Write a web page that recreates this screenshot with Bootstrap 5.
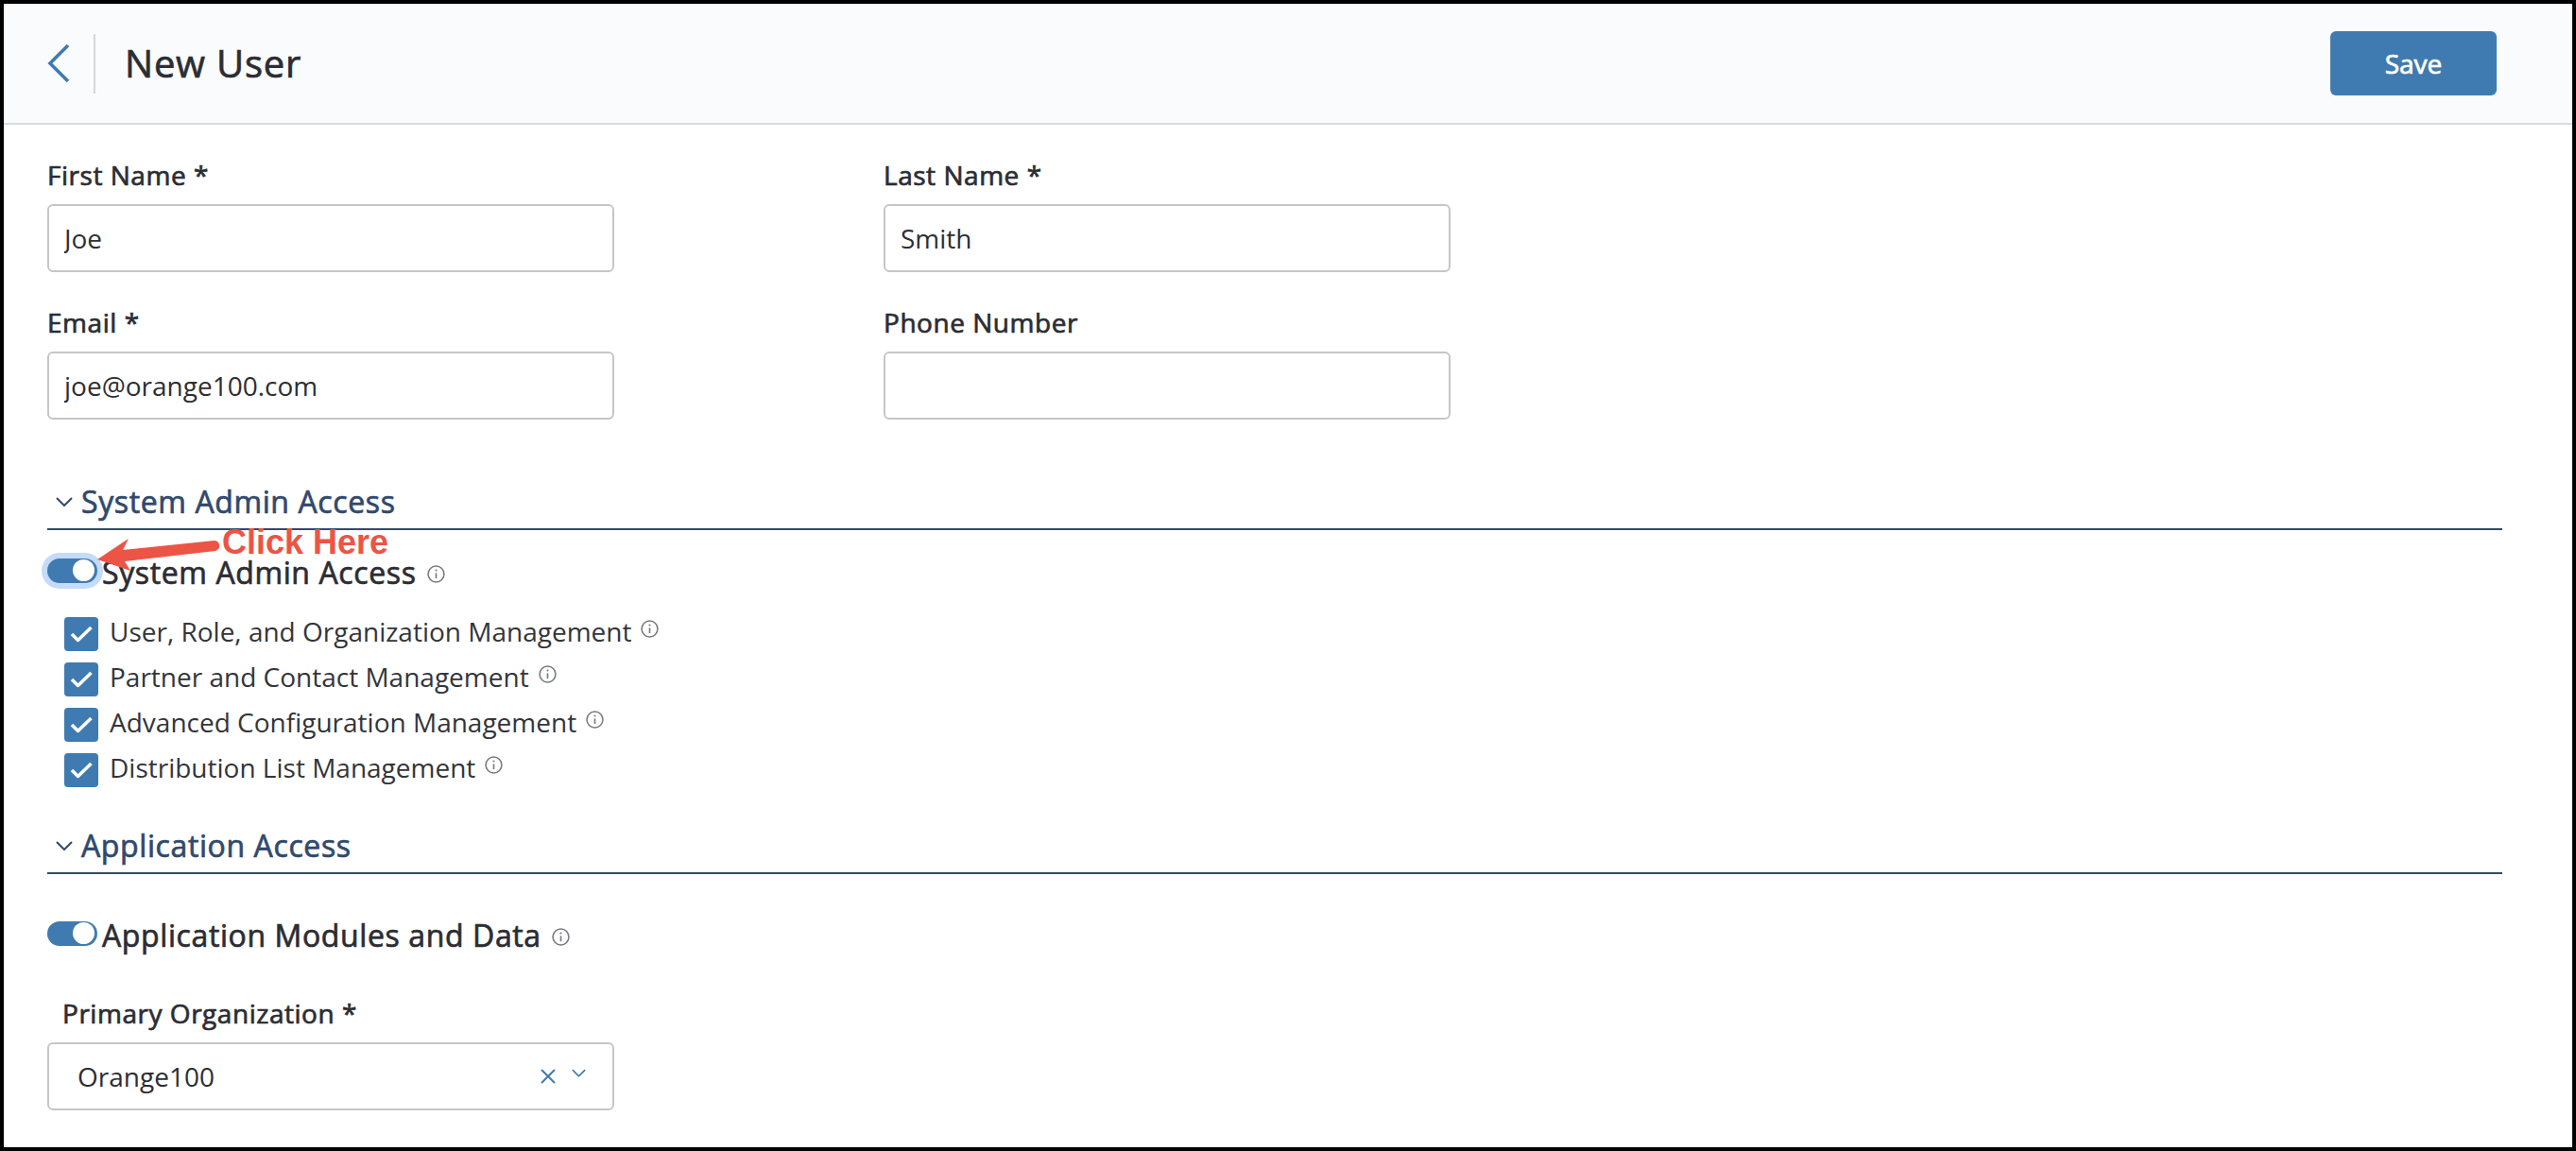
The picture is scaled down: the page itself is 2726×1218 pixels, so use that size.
<!DOCTYPE html>
<html lang="en">
<head>
<meta charset="utf-8">
<title>New User</title>
<link href="https://cdn.jsdelivr.net/npm/bootstrap@5.3.0/dist/css/bootstrap.min.css" rel="stylesheet">
<style>
html,body{height:100%;margin:0;overflow:hidden;background:#fff}
body{font-family:"Open Sans","Noto Sans",sans-serif;color:#2b2d33}
.page{position:relative;height:100vh;border:4px solid #000;overflow:hidden}
.top{height:128px;background:#fafbfd;border-bottom:2px solid #d5dde0;padding:0 80px 0 46px}
.back{padding-right:25px;margin-right:31px;height:63px;border-right:2px solid #d3d8db;display:flex;align-items:center}
.title,.btn-save,.lbl,.sec,.tg label{font-weight:500;-webkit-text-stroke:.7px currentColor;letter-spacing:.019em}
.title{font-size:40px;line-height:56px;margin:0;color:#2b2d33}
.btn-save{width:176px;height:68px;background:#3f7bb0;border:0;border-radius:6px;color:#fff;font-size:28px;padding:0;letter-spacing:0}
.btn-save:hover{background:#3f7bb0;color:#fff}
.main{padding:33px 74px 0 46px}
.fields{display:grid;grid-template-columns:600px 600px;column-gap:285px;row-gap:33px}
.lbl{display:block;font-size:28px;line-height:40px;margin:0 0 11px;color:#2b2d33}
.inp{height:72px;border:2px solid #c6c6c6;border-radius:6px;font-size:28px;padding:0 16px;color:#2e2e33;background:#fff}
.sec{display:flex;align-items:center;gap:9px;height:50px;border-bottom:2px solid #34496b;padding:0 0 8px 9px;color:#30496e;font-size:32px;line-height:40px;margin:0}
.sec-1{margin-top:67px}
.sec-2{margin-top:40px}
.tg{display:flex;align-items:flex-start;height:40px;line-height:40px;font-size:32px;padding:0;margin:0;min-height:0}
.tg-1{margin-top:24px}
.tg-2{margin-top:45px}
.tg .form-check-input{float:none;margin:6px 5px 0 0;width:53px;height:26px;border:0;background-color:#3f7bb0;border-radius:13px;background-position:right center;background-image:url("data:image/svg+xml,%3csvg xmlns='http://www.w3.org/2000/svg' viewBox='-13 -13 26 26'%3e%3ccircle r='11.5' cx='-1.5' cy='-.5' fill='%23fff'/%3e%3c/svg%3e");flex:none}
.tg-2 .form-check-input{margin-top:5px}
.tg-1 .form-check-input{box-shadow:0 0 0 6px #c4dbfb}
.tg label{margin:0;color:#2b2d33}
.tg-1 label{padding-top:1px}
.inf{flex:none;width:19px;height:19px;color:#77797c}
.tg .inf{margin:13px 0 0 11px}
.tg-2 .inf{margin-top:12px}
.perms{margin-top:18px;padding-left:18px}
.perm{display:flex;align-items:flex-start;height:48px;line-height:48px;font-size:28px;padding:0;margin:0;min-height:0}
.perm .form-check-input{float:none;flex:none;width:36px;height:36px;margin:10px 12px 0 0;border:0;border-radius:4px;background-color:#3f7bb0;background-size:36px 36px;background-image:url("data:image/svg+xml,%3csvg xmlns='http://www.w3.org/2000/svg' viewBox='0 0 36 36'%3e%3cpath fill='none' stroke='%23fff' stroke-width='3.5' stroke-linejoin='round' d='M8 18l6.500 6.500L28.500 11'/%3e%3c/svg%3e")}
.perm label{margin:0;padding-top:1px;color:#33353a}
.perm .inf{margin:13px 0 0 10px}
.org{margin-top:42px;width:600px}
.org .lbl{padding-left:16px}
.sel{height:72px;border:2px solid #c6c6c6;border-radius:6px;padding:0 28px 0 30px;font-size:28px;color:#2e2e33}
.note{position:absolute;left:96px;top:553px;width:320px;height:60px;pointer-events:none}
.note svg{position:absolute;left:0;top:0}
.note span{position:absolute;left:135px;top:-3px;color:#ec5446;font:700 36px/40px "Liberation Sans",Arial,sans-serif;white-space:nowrap}
</style>
</head>
<body>
<svg width="0" height="0" class="d-none" aria-hidden="true">
<symbol id="info" viewBox="0 0 20 20"><circle cx="10" cy="10" r="8.900" fill="none" stroke="currentColor" stroke-width="1.600"/><path d="M10 8.800v6" stroke="currentColor" stroke-width="1.700" fill="none"/><circle cx="10" cy="5.800" r="1.100" fill="currentColor"/></symbol>
<symbol id="chev" viewBox="0 0 18 10"><path d="M1 1l8 8 8-8" fill="none" stroke="currentColor" stroke-width="2"/></symbol>
</svg>
<div class="page">
  <header class="top d-flex align-items-center justify-content-between">
    <div class="d-flex align-items-center">
      <a class="back" href="#" aria-label="Back">
        <svg width="24" height="42" viewBox="0 0 24 42"><path d="M22 2L3 21l19 19" fill="none" stroke="#3f7bb0" stroke-width="3.600"/></svg>
      </a>
      <h1 class="title">New User</h1>
    </div>
    <button type="button" class="btn btn-save">Save</button>
  </header>
  <main class="main">
    <div class="fields">
      <div><label class="lbl form-label" for="f1">First Name *</label><input id="f1" class="form-control inp" value="Joe"></div>
      <div><label class="lbl form-label" for="f2">Last Name *</label><input id="f2" class="form-control inp" value="Smith"></div>
      <div><label class="lbl form-label" for="f3">Email *</label><input id="f3" class="form-control inp" value="joe@orange100.com"></div>
      <div><label class="lbl form-label" for="f4">Phone Number</label><input id="f4" class="form-control inp" value=""></div>
    </div>

    <h2 class="sec sec-1"><svg width="18" height="10" color="#30496e"><use href="#chev"/></svg>System Admin Access</h2>
    <div class="form-check form-switch tg tg-1">
      <input class="form-check-input" type="checkbox" role="switch" id="s1" checked>
      <label for="s1">System Admin Access</label>
      <svg class="inf"><use href="#info"/></svg>
    </div>
    <div class="perms">
      <div class="form-check perm"><input class="form-check-input" type="checkbox" id="p1" checked><label for="p1">User, Role, and Organization Management</label><svg class="inf"><use href="#info"/></svg></div>
      <div class="form-check perm"><input class="form-check-input" type="checkbox" id="p2" checked><label for="p2">Partner and Contact Management</label><svg class="inf"><use href="#info"/></svg></div>
      <div class="form-check perm"><input class="form-check-input" type="checkbox" id="p3" checked><label for="p3">Advanced Configuration Management</label><svg class="inf"><use href="#info"/></svg></div>
      <div class="form-check perm"><input class="form-check-input" type="checkbox" id="p4" checked><label for="p4">Distribution List Management</label><svg class="inf"><use href="#info"/></svg></div>
    </div>

    <h2 class="sec sec-2"><svg width="18" height="10" color="#30496e"><use href="#chev"/></svg>Application Access</h2>
    <div class="form-check form-switch tg tg-2">
      <input class="form-check-input" type="checkbox" role="switch" id="s2" checked>
      <label for="s2">Application Modules and Data</label>
      <svg class="inf"><use href="#info"/></svg>
    </div>
    <div class="org">
      <label class="lbl form-label">Primary Organization *</label>
      <div class="sel d-flex align-items-center justify-content-between">
        <span>Orange100</span>
        <span class="d-flex align-items-center gap-3" aria-hidden="true">
          <svg width="18" height="16" viewBox="0 0 18 16"><path d="M2 1l14 14M16 1L2 15" fill="none" stroke="#3f7bb0" stroke-width="2"/></svg>
          <svg width="15" height="9" viewBox="0 0 18 10" class="mb-2" color="#3f7bb0"><use href="#chev"/></svg>
        </span>
      </div>
    </div>
  </main>
  <div class="note">
    <svg width="140" height="60" viewBox="0 0 140 60"><path d="M3 35L36 13 30 25 127 15A5.600 5.600 0 0 1 128 26L32 37 38 47z" fill="#ec5446"/></svg>
    <span>Click Here</span>
  </div>
</div>
</body>
</html>
